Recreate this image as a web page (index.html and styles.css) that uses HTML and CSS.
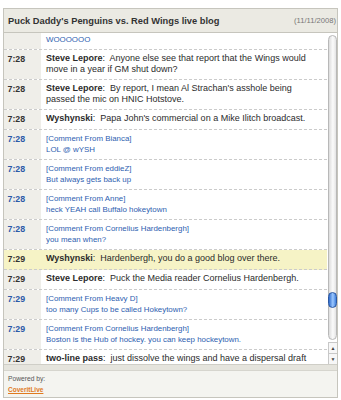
FILE: index.html
```html
<!DOCTYPE html>
<html>
<head>
<meta charset="utf-8">
<link rel="stylesheet" href="styles.css">
</head>
<body>
<div class="blog">
  <div class="blog-head">
    <span class="title">Puck Daddy's Penguins vs. Red Wings live blog</span>
    <span class="date">(11/11/2008)</span>
  </div>
  <div class="blog-body">
    <div class="feed">
      <div class="row row--comment row--cut">
        <div class="time"></div>
        <div class="msg">WOOOOOO</div>
      </div>
      <div class="row">
        <div class="time">7:28</div>
        <div class="msg"><b>Steve Lepore</b>:&nbsp; Anyone else see that report that the Wings would move in a year if GM shut down?</div>
      </div>
      <div class="row">
        <div class="time">7:28</div>
        <div class="msg"><b>Steve Lepore</b>:&nbsp; By report, I mean Al Strachan's asshole being passed the mic on HNIC Hotstove.</div>
      </div>
      <div class="row">
        <div class="time">7:28</div>
        <div class="msg"><b>Wyshynski</b>:&nbsp; Papa John's commercial on a Mike Ilitch broadcast.</div>
      </div>
      <div class="row row--comment">
        <div class="time">7:28</div>
        <div class="msg"><div>[Comment From Bianca]</div><div>LOL @ wYSH</div></div>
      </div>
      <div class="row row--comment">
        <div class="time">7:28</div>
        <div class="msg"><div>[Comment From eddieZ]</div><div>But always gets back up</div></div>
      </div>
      <div class="row row--comment">
        <div class="time">7:28</div>
        <div class="msg"><div>[Comment From Anne]</div><div>heck YEAH call Buffalo hokeytown</div></div>
      </div>
      <div class="row row--comment">
        <div class="time">7:28</div>
        <div class="msg"><div>[Comment From Cornelius Hardenbergh]</div><div>you mean when?</div></div>
      </div>
      <div class="row row--hl">
        <div class="time">7:29</div>
        <div class="msg"><b>Wyshynski</b>:&nbsp; Hardenbergh, you do a good blog over there.</div>
      </div>
      <div class="row">
        <div class="time">7:29</div>
        <div class="msg"><b>Steve Lepore</b>:&nbsp; Puck the Media reader Cornelius Hardenbergh.</div>
      </div>
      <div class="row row--comment">
        <div class="time">7:29</div>
        <div class="msg"><div>[Comment From Heavy D]</div><div>too many Cups to be called Hokeytown?</div></div>
      </div>
      <div class="row row--comment">
        <div class="time">7:29</div>
        <div class="msg"><div>[Comment From Cornelius Hardenbergh]</div><div>Boston is the Hub of hockey. you can keep hockeytown.</div></div>
      </div>
      <div class="row">
        <div class="time">7:29</div>
        <div class="msg"><b>two-line pass</b>:&nbsp; just dissolve the wings and have a dispersal draft</div>
      </div>
    </div>
    <div class="scrollbar">
      <div class="track"><div class="thumb"></div></div>
      <div class="arrow">&#9650;</div>
      <div class="arrow">&#9660;</div>
    </div>
  </div>
  <div class="blog-band"></div>
  <div class="blog-foot">
    <div class="powered">Powered by:</div>
    <a class="brand" href="#">CoveritLive</a>
  </div>
</div>
</body>
</html>
```

FILE: styles.css
```css
* { box-sizing: border-box; }

body {
  margin: 8px 0 0 3px;
  background: #fff;
  font-family: "Liberation Sans", Arial, sans-serif;
}

.blog {
  width: 335px;
  border: 1px solid #c6c5bd;
}

.blog-head {
  height: 24px;
  background: #ebeae3;
  border-bottom: 1px solid #c6c5bd;
  display: flex;
  align-items: center;
  justify-content: space-between;
  padding: 0 1px 0 4px;
}

.title {
  font-weight: bold;
  font-size: 9.3px;
  color: #333;
}

.date {
  font-size: 7.6px;
  color: #777;
}

.blog-body {
  height: 331px;
  display: flex;
}

.feed {
  flex: 1;
  overflow: hidden;
}

.row {
  display: flex;
  border-bottom: 1px dashed #cbcbcb;
}

.time {
  width: 37px;
  flex: none;
  background: #efeee9;
  padding: 3px 0 3px 3.5px;
  font-weight: bold;
  font-size: 8.8px;
  line-height: 13px;
  color: #333;
}

.msg {
  flex: 1;
  padding: 3px 4px 3px 5px;
  font-size: 9px;
  line-height: 11.5px;
  color: #2b2b2b;
}

.row--comment .time { color: #2b5aa8; }

.row--comment .msg {
  font-size: 7.9px;
  line-height: 11.5px;
  color: #2e60b0;
}

.row--cut .msg { padding-top: 1px; }

.row--hl { background: #f6f3c6; }
.row--hl .time { background: transparent; }

.scrollbar {
  width: 10px;
  flex: none;
  display: flex;
  flex-direction: column;
  padding: 2px 0 0 1px;
}

.track {
  flex: 1;
  position: relative;
  border: 1px solid #b8b8b8;
  border-radius: 5px;
  background: linear-gradient(to right, #dcdcdc, #fbfbfb 55%, #e4e4e4);
  margin-bottom: 2px;
}

.thumb {
  position: absolute;
  left: -1px;
  right: -1px;
  top: 256px;
  height: 16px;
  border-radius: 5px;
  border: 1px solid #2a58a4;
  background: linear-gradient(to right, #2f6ccc, #9cc8ff 55%, #3f7fdc);
}

.arrow {
  height: 11px;
  display: flex;
  align-items: center;
  justify-content: center;
  font-size: 5px;
  color: #444;
  border-top: 1px solid #c8c8c8;
  border-left: 1px solid #c8c8c8;
  background: #f7f7f7;
}

.blog-band {
  height: 6px;
  background: #e5e4dd;
  border-top: 1px solid #cfcec7;
}

.blog-foot {
  height: 27px;
  background: #f4f4f0;
  border-top: 1px solid #d6d5ce;
  padding: 3px 4px;
  font-size: 6.7px;
  line-height: 10.5px;
}

.powered {
  color: #555;
}

.brand {
  display: block;
  font-size: 6.5px;
  font-weight: bold;
  color: #e07a1f;
  text-decoration: underline;
}
```
